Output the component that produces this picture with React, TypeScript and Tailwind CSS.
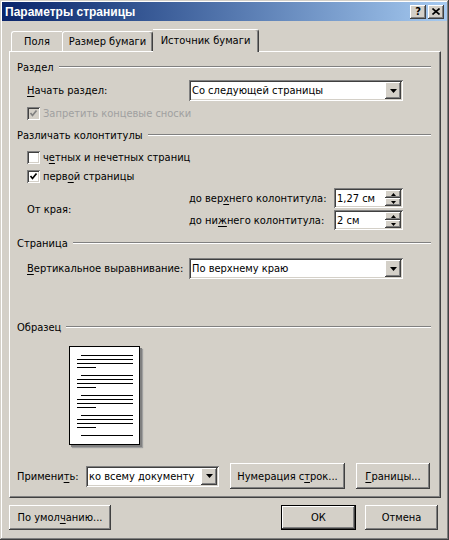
import React from 'react'

// classic 3D bevels
const raised =
  'shadow-[inset_-1px_-1px_#404040,inset_1px_1px_#ffffff,inset_-2px_-2px_#808080,inset_2px_2px_#d4d0c8]'
const sunken =
  'shadow-[inset_1px_1px_#808080,inset_-1px_-1px_#ffffff,inset_2px_2px_#404040,inset_-2px_-2px_#d4d0c8]'

function U({ children }: { children: React.ReactNode }) {
  return <span className="underline underline-offset-[2px]">{children}</span>
}

function Group({ title }: { title: string }) {
  return (
    <div className="flex items-center h-[16px] gap-[5px]">
      <span className="whitespace-nowrap">{title}</span>
      <div className="flex-1 h-[2px] border-t border-t-[#808080] border-b border-b-white" />
    </div>
  )
}

function ArrowDown({ w = 7, h = 4 }: { w?: number; h?: number }) {
  return (
    <svg width={w} height={h} viewBox={`0 0 ${w} ${h}`}>
      <polygon points={`0,0 ${w},0 ${w / 2},${h}`} fill="#000" />
    </svg>
  )
}

function ArrowUp({ w = 5, h = 3 }: { w?: number; h?: number }) {
  return (
    <svg width={w} height={h} viewBox={`0 0 ${w} ${h}`}>
      <polygon points={`0,${h} ${w},${h} ${w / 2},0`} fill="#000" />
    </svg>
  )
}

function Select({ value, width }: { value: string; width: string }) {
  return (
    <div className={`${width} h-[21px] bg-white ${sunken} flex items-center`}>
      <span className="flex-1 pl-[3px] whitespace-nowrap overflow-hidden">{value}</span>
      <div className={`w-[16px] h-[17px] mr-[2px] bg-[#d4d0c8] ${raised} flex items-center justify-center`}>
        <ArrowDown />
      </div>
    </div>
  )
}

function Spinner({ value }: { value: string }) {
  return (
    <div className={`w-[69px] h-[20px] bg-white ${sunken} flex items-center`}>
      <span className="flex-1 pl-[3px] whitespace-nowrap">{value}</span>
      <div className="flex flex-col mr-[2px]">
        <div className={`w-[16px] h-[8px] bg-[#d4d0c8] ${raised} flex items-center justify-center`}>
          <ArrowUp />
        </div>
        <div className={`w-[16px] h-[8px] bg-[#d4d0c8] ${raised} flex items-center justify-center`}>
          <ArrowDown w={5} h={3} />
        </div>
      </div>
    </div>
  )
}

function Check({ checked, disabled }: { checked?: boolean; disabled?: boolean }) {
  return (
    <span
      className={`w-[13px] h-[13px] shrink-0 ${disabled ? 'bg-[#d4d0c8]' : 'bg-white'} ${sunken} flex items-center justify-center`}
    >
      {checked && (
        <svg width="9" height="9" viewBox="0 0 9 9">
          <polyline
            points="1.5,4 3.5,6.5 7.5,1.5"
            fill="none"
            stroke={disabled ? '#808080' : '#000'}
            strokeWidth="1.7"
          />
        </svg>
      )}
    </span>
  )
}

function Button({
  children,
  width,
  isDefault,
}: {
  children: React.ReactNode
  width: string
  isDefault?: boolean
}) {
  return (
    <div
      className={`${width} h-full flex items-center justify-center whitespace-nowrap ${
        isDefault ? 'border border-black' : ''
      }`}
    >
      <div className={`w-full h-full bg-[#d4d0c8] ${raised} flex items-center justify-center`}>
        {children}
      </div>
    </div>
  )
}

function PreviewPage() {
  const paras = [0, 20, 40, 60]
  return (
    <div className="w-[71px] h-[99px] bg-white border border-black shadow-[2px_2px_0_#808080,3px_3px_1px_#a0a0a0] ml-[52px]">
      <svg width="69" height="97" viewBox="0 0 69 97">
        {paras.map((y) => (
          <g key={y} fill="#000">
            <rect x="11" y={8 + y} width="52" height="1" />
            <rect x="7" y={12 + y} width="56" height="1" />
            <rect x="7" y={16 + y} width="56" height="1" />
            <rect x="7" y={20 + y} width="19" height="1" />
          </g>
        ))}
        <rect x="11" y="88" width="52" height="1" fill="#000" />
      </svg>
    </div>
  )
}

export default function App() {
  return (
    <div
      className="w-[449px] h-[540px] bg-[#d4d0c8] p-[2px] flex flex-col text-[11px] text-black leading-none shadow-[inset_-1px_-1px_#404040,inset_1px_1px_#d4d0c8,inset_-2px_-2px_#808080,inset_2px_2px_#ffffff] overflow-hidden"
      style={{ fontFamily: '"DejaVu Sans Condensed", "DejaVu Sans", sans-serif' }}
    >
      {/* title bar */}
      <div className="h-[19px] shrink-0 bg-linear-to-r from-[#0a246a] to-[#a6caf0] flex items-center pl-[3px] pr-[3px]">
        <span
          className="flex-1 text-white font-bold text-[12px]"
          style={{ fontFamily: '"Liberation Sans", Arial, sans-serif' }}
        >
          Параметры страницы
        </span>
        <div className="flex gap-[2px]">
          <div className={`w-[16px] h-[14px] bg-[#d4d0c8] ${raised} flex items-center justify-center font-bold text-[11px]`}>
            ?
          </div>
          <div className={`w-[16px] h-[14px] bg-[#d4d0c8] ${raised} flex items-center justify-center`}>
            <svg width="8" height="7" viewBox="0 0 8 7">
              <path d="M0.5 0.5 L7.5 6.5 M7.5 0.5 L0.5 6.5" stroke="#000" strokeWidth="1.6" />
            </svg>
          </div>
        </div>
      </div>

      <div className="pl-[7px] pr-[6px] mt-[8px] flex flex-col">
        {/* tabs */}
        <div className="h-[22px] flex items-end pl-[2px]">
          <div className="w-[51px] h-[20px] border-l border-t border-white rounded-tl-[3px] flex items-center justify-center">
            Поля
          </div>
          <div className="w-[91px] h-[20px] border-l border-t border-white border-r border-r-[#404040] shadow-[inset_-1px_0_#808080] rounded-t-[3px] flex items-center justify-center">
            Размер бумаги
          </div>
          <div className="relative z-10 -mb-px w-[106px] h-[23px] bg-[#d4d0c8] border-t border-white border-r border-r-[#404040] shadow-[inset_-1px_0_#808080] rounded-tr-[3px] flex items-center justify-center pb-[2px]">
            Источник бумаги
          </div>
        </div>

        {/* panel */}
        <div className="h-[447px] border-l border-t border-white border-r border-b border-r-[#404040] border-b-[#404040] shadow-[inset_-1px_-1px_#808080] pt-[7px] pl-[7px] pr-[9px] flex flex-col">
          <Group title="Раздел" />
          <div className="mt-[5px] h-[21px] flex items-center pl-[10px]">
            <span className="w-[162px]">
              <U>Н</U>ачать раздел:
            </span>
            <Select value="Со следующей страницы" width="w-[214px]" />
          </div>
          <div className="mt-[4px] h-[16px] flex items-center pl-[10px] gap-[3px]">
            <Check checked disabled />
            <span className="text-[#a0a0a0]">Запретить концевые сноски</span>
          </div>

          <div className="mt-[6px]">
            <Group title="Различать колонтитулы" />
          </div>
          <div className="mt-[6px] h-[16px] flex items-center pl-[10px] gap-[3px]">
            <Check />
            <span>
              ч<U>е</U>тных и нечетных страниц
            </span>
          </div>
          <div className="mt-[3px] h-[16px] flex items-center pl-[10px] gap-[3px]">
            <Check checked />
            <span>
              перв<U>о</U>й страницы
            </span>
          </div>

          <div className="mt-[4px] flex w-[386px]">
            <span className="w-[172px] pl-[10px] self-center">От края:</span>
            <div className="flex flex-col gap-[2px]">
              <div className="h-[20px] flex items-center">
                <span className="w-[145px]">
                  до вер<U>х</U>него колонтитула:
                </span>
                <Spinner value="1,27 см" />
              </div>
              <div className="h-[20px] flex items-center">
                <span className="w-[145px]">
                  до ни<U>ж</U>него колонтитула:
                </span>
                <Spinner value="2 см" />
              </div>
            </div>
          </div>

          <div className="mt-[5px]">
            <Group title="Страница" />
          </div>
          <div className="mt-[7px] h-[21px] flex items-center pl-[10px]">
            <span className="w-[162px]">
              <U>В</U>ертикальное выравнивание:
            </span>
            <Select value="По верхнему краю" width="w-[214px]" />
          </div>

          <div className="mt-[40px]">
            <Group title="Образец" />
          </div>
          <div className="mt-[11px]">
            <PreviewPage />
          </div>

          <div className="mt-[18px] h-[26px] flex items-center">
            <span className="w-[69px]">
              Примени<U>т</U>ь:
            </span>
            <Select value="ко всему документу" width="w-[133px]" />
            <div className="ml-[11px] h-full">
              <Button width="w-[115px]">
                Нумерация с<U>т</U>рок...
              </Button>
            </div>
            <div className="ml-[11px] h-full">
              <Button width="w-[74px]">
                <U>Г</U>раницы...
              </Button>
            </div>
          </div>
        </div>

        {/* dialog buttons */}
        <div className="mt-[7px] h-[25px] flex items-center pr-[3px]">
          <Button width="w-[102px]">
            По умол<U>ч</U>анию...
          </Button>
          <div className="flex-1" />
          <Button width="w-[75px]" isDefault>
            ОК
          </Button>
          <div className="w-[9px]" />
          <Button width="w-[73px]">Отмена</Button>
        </div>
      </div>
    </div>
  )
}
